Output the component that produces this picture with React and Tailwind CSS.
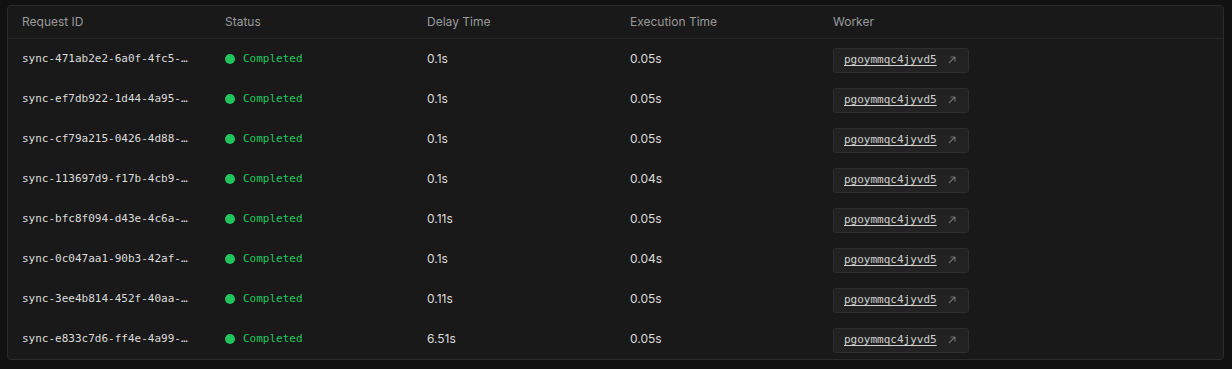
const rows = [
  { id: "sync-471ab2e2-6a0f-4fc5-…", delay: "0.1s", exec: "0.05s" },
  { id: "sync-ef7db922-1d44-4a95-…", delay: "0.1s", exec: "0.05s" },
  { id: "sync-cf79a215-0426-4d88-…", delay: "0.1s", exec: "0.05s" },
  { id: "sync-113697d9-f17b-4cb9-…", delay: "0.1s", exec: "0.04s" },
  { id: "sync-bfc8f094-d43e-4c6a-…", delay: "0.11s", exec: "0.05s" },
  { id: "sync-0c047aa1-90b3-42af-…", delay: "0.1s", exec: "0.04s" },
  { id: "sync-3ee4b814-452f-40aa-…", delay: "0.11s", exec: "0.05s" },
  { id: "sync-e833c7d6-ff4e-4a99-…", delay: "6.51s", exec: "0.05s" },
];

const cols = "grid grid-cols-[203px_202px_203px_203px_1fr]";
const mono = "font-['DejaVu_Sans_Mono',monospace] text-[11px]";

function ArrowIcon() {
  return (
    <svg width="10" height="10" viewBox="0 0 10 10" fill="none" stroke="#6b6b6b" strokeWidth="1.2">
      <path d="M2 8L8 2M3.5 2H8V6.5" />
    </svg>
  );
}

export default function App() {
  return (
    <div className="w-[1232px] h-[369px] bg-[#111111] pt-[5px] pl-[7px] pr-[8px] font-['Inter',sans-serif]">
      <div className="bg-[#191919] border border-[#2a2a2a] rounded-[4px] overflow-hidden">
        {/* header */}
        <div className={`${cols} h-[33px] items-center border-b border-[#262626] text-[12px] text-[#9a9a9a]`}>
          <div className="pl-[14px]">Request ID</div>
          <div className="pl-[14px]">Status</div>
          <div className="pl-[14px]">Delay Time</div>
          <div className="pl-[14px]">Execution Time</div>
          <div className="pl-[14px]">Worker</div>
        </div>

        {rows.map((r) => (
          <div key={r.id} className={`${cols} h-[40px] items-center`}>
            <div className={`pl-[14px] ${mono} text-[#dcdcdc] whitespace-nowrap`}>{r.id}</div>
            <div className="pl-[14px] flex items-center gap-[8px]">
              <span className="w-[10px] h-[10px] rounded-full bg-[#22c55e]" />
              <span className={`${mono} text-[#22c55e]`}>Completed</span>
            </div>
            <div className="pl-[14px] text-[12px] text-[#dcdcdc]">{r.delay}</div>
            <div className="pl-[14px] text-[12px] text-[#dcdcdc]">{r.exec}</div>
            <div className="pl-[14px]">
              <div className="inline-flex items-center gap-[10px] h-[25px] w-[136px] pl-[10px] bg-[#222222] border border-[#2e2e2e] rounded-[3px]">
                <span className={`${mono} text-[#cfcfcf] underline underline-offset-2`}>pgoymmqc4jyvd5</span>
                <ArrowIcon />
              </div>
            </div>
          </div>
        ))}
      </div>
    </div>
  );
}
